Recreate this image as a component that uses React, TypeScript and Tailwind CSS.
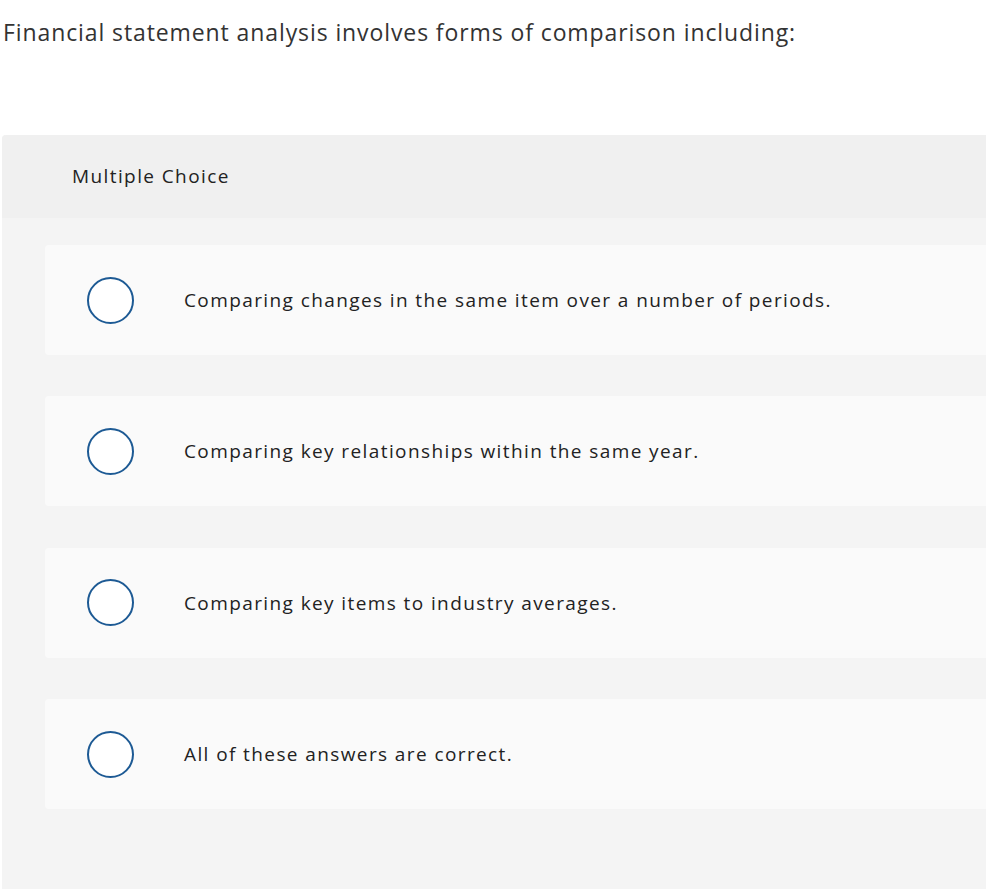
import React from "react";

const options = [
  "Comparing changes in the same item over a number of periods.",
  "Comparing key relationships within the same year.",
  "Comparing key items to industry averages.",
  "All of these answers are correct.",
];

export default function App() {
  return (
    <div className="w-[986px] h-[890px] bg-white overflow-hidden" style={{ fontFamily: "'Open Sans', sans-serif" }}>
      <div className="pl-[3px] pt-[17px] h-[135px] text-[23px] leading-[30px] text-[#333333] tracking-[0.9px]">
        Financial statement analysis involves forms of comparison including:
      </div>
      <div className="ml-[2px] w-[1000px] h-[754px] bg-[#f4f4f4] rounded-tl-[4px] overflow-hidden">
        <div className="h-[83px] bg-[#f0f0f0] flex items-center pl-[70px] text-[19px] text-[#222222] tracking-[1.4px]">
          Multiple Choice
        </div>
        <div className="pl-[43px] pt-[27px] flex flex-col gap-[41.4px]">
          {options.map((o) => (
            <div key={o} className="h-[110px] bg-[#fafafa] rounded-[4px] flex items-center pl-[42px]">
              <div className="w-[47px] h-[47px] rounded-full border-2 border-[#1d5a94] bg-white shrink-0" />
              <div className="ml-[50px] text-[19px] text-[#222222] tracking-[1.4px]">{o}</div>
            </div>
          ))}
        </div>
      </div>
    </div>
  );
}
